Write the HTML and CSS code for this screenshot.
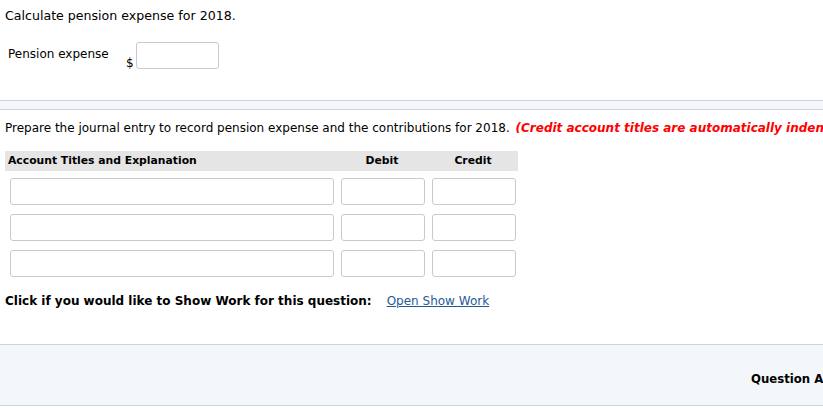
FILE: index.html
```html
<!DOCTYPE html>
<html>
<head>
<meta charset="utf-8">
<link rel="stylesheet" href="styles.css">
</head>
<body>
<div class="part">
  <p class="prompt first">Calculate pension expense for 2018.</p>
  <div class="pension-row">
    <span class="pension-label">Pension expense</span>
    <span class="dollar">$</span>
    <span class="box pension-box"></span>
  </div>
</div>
<div class="separator"></div>
<div class="part journal">
  <p class="prompt">Prepare the journal entry to record pension expense and the contributions for 2018. <span class="note">(Credit account titles are automatically indented when amount is entered. Do not indent manually.)</span></p>
  <div class="jhead">
    <div class="jh-title">Account Titles and Explanation</div>
    <div class="jh-num">Debit</div>
    <div class="jh-num">Credit</div>
  </div>
  <div class="jrows">
    <div class="jrow"><span class="box b-title"></span><span class="box b-num"></span><span class="box b-num"></span></div>
    <div class="jrow"><span class="box b-title"></span><span class="box b-num"></span><span class="box b-num"></span></div>
    <div class="jrow"><span class="box b-title"></span><span class="box b-num"></span><span class="box b-num"></span></div>
  </div>
  <div class="showwork">
    <span class="sw-label">Click if you would like to Show Work for this question:</span>
    <a class="sw-link" href="#">Open Show Work</a>
  </div>
</div>
<div class="footer">
  <span class="qa">Question Attempts: 0 of 1 used</span>
</div>
</body>
</html>
```
FILE: styles.css
```css
html, body {
  margin: 0;
  padding: 0;
  background: #fff;
  overflow: hidden;
}
body {
  font-family: "DejaVu Sans", Verdana, sans-serif;
  font-size: 12px;
  color: #000;
  width: 823px;
}
.part {
  padding: 0 0 0 5px;
}
.prompt {
  margin: 0;
  padding-top: 8px;
  line-height: 15px;
  white-space: nowrap;
}
.prompt.first {
  font-size: 12.6px;
}
.pension-row {
  display: flex;
  align-items: flex-start;
  margin-top: 19px;
  padding-left: 3px;
  height: 27px;
}
.pension-label {
  line-height: 15px;
  margin-top: 5px;
  width: 118px;
}
.dollar {
  margin-top: 14px;
  line-height: 15px;
  width: 10px;
}
.box {
  display: block;
  box-sizing: border-box;
  height: 27px;
  border: 1px solid #c9c9c9;
  border-radius: 3px;
  background: #fff;
}
.pension-box {
  width: 83px;
}
.separator {
  margin-top: 31px;
  height: 8px;
  border-top: 1px solid #c9d3de;
  border-bottom: 1px solid #c9d3de;
  background: #f4f7fa;
}
.journal .prompt {
  padding-top: 11px;
}
.note {
  color: #ff0000;
  font-weight: bold;
  font-style: italic;
  margin-left: 2px;
}
.jhead {
  display: grid;
  grid-template-columns: 331px 92px 90px;
  width: 513px;
  margin-top: 15px;
  height: 20px;
  background: #e5e5e5;
  font-weight: bold;
  font-size: 10.8px;
  line-height: 20px;
}
.jh-title {
  padding-left: 3px;
}
.jh-num {
  text-align: center;
}
.jrows {
  display: flex;
  flex-direction: column;
  gap: 9px;
  margin-top: 7px;
  padding-left: 5px;
}
.jrow {
  display: flex;
  gap: 7px;
}
.b-title {
  width: 324px;
}
.b-num {
  width: 84px;
}
.showwork {
  margin-top: 17px;
  line-height: 15px;
  display: flex;
  gap: 15px;
}
.sw-label {
  font-weight: bold;
}
.sw-link {
  color: #1f5a96;
  text-decoration: underline;
}
.footer {
  margin-top: 35px;
  height: 60px;
  border-top: 1px solid #c9d3de;
  border-bottom: 1px solid #c9d3de;
  background: #f4f7fa;
  display: flex;
  align-items: center;
  padding-left: 751px;
  white-space: nowrap;
}
.qa {
  font-family: "Liberation Sans Narrow", "DejaVu Sans Condensed", sans-serif;
  font-weight: bold;
  font-size: 13px;
  margin-top: 7px;
}
```
